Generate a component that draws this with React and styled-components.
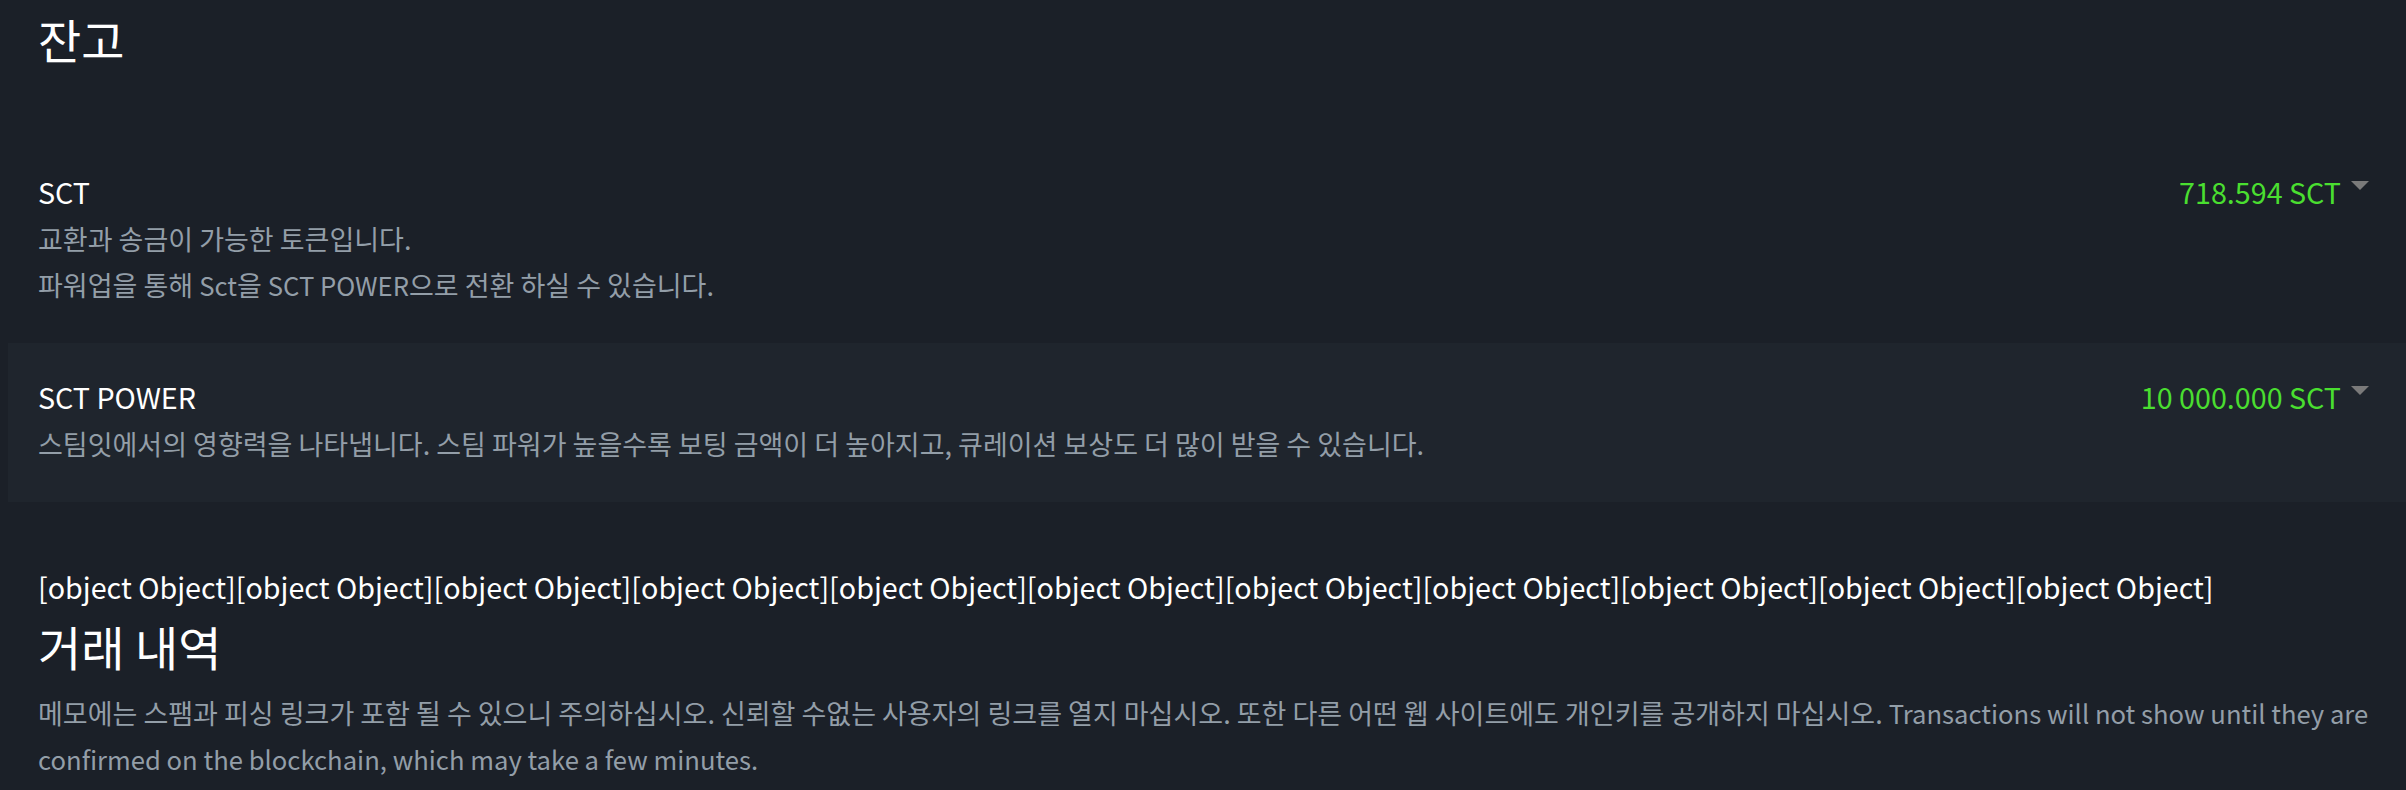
import React from "react";
import styled, { createGlobalStyle } from "styled-components";

const GlobalStyle = createGlobalStyle`
  html, body {
    margin: 0;
    padding: 0;
    background: #1b2028;
  }
  body {
    font-family: "Noto Sans CJK KR", "Noto Sans", sans-serif;
    color: #ffffff;
    overflow-x: hidden;
  }
`;

const Page = styled.div`
  padding-left: 8px;
  padding-top: 12px;
`;

const Section = styled.section`
  padding: 0 30px;
`;

const Title = styled.h2`
  margin: 0;
  font-size: 47px;
  line-height: 54px;
  font-weight: 400;
  color: #ffffff;
`;

const Balances = styled.div`
  margin-top: 72px;
`;

const BalanceRow = styled.div`
  display: flex;
  justify-content: space-between;
  align-items: flex-start;
  padding: 34px 37px 35px 30px;
  background: ${(p) => (p.$shaded ? "#1f252d" : "transparent")};
`;

const Info = styled.div`
  display: flex;
  flex-direction: column;
`;

const Label = styled.div`
  font-size: 28.7px;
  line-height: 40px;
  color: #ffffff;
  margin-bottom: 4px;
`;

const Desc = styled.div`
  font-size: 27px;
  line-height: 46px;
  color: #939ea8;
`;

const Latin = styled.span`
  font-size: 0.95em;
`;

const Amount = styled.div`
  display: flex;
  align-items: center;
  gap: 10px;
  font-size: 28.7px;
  line-height: 40px;
  color: #4ade30;
  white-space: nowrap;
`;

const Caret = styled.span`
  display: inline-block;
  width: 0;
  height: 0;
  border-left: 9px solid transparent;
  border-right: 9px solid transparent;
  border-top: 9px solid #7a7a7a;
  margin-bottom: 14px;
`;

const History = styled(Section)`
  margin-top: 65px;
`;

const ObjectLine = styled.div`
  font-size: 28.7px;
  line-height: 40px;
  color: #ffffff;
`;

const HistoryTitle = styled(Title)`
  margin-top: 12px;
`;

const Notice = styled.p`
  margin: 17px 0 0;
  font-size: 27px;
  line-height: 46px;
  color: #939ea8;
  padding-right: 6px;
`;

const balances = [
  {
    label: "SCT",
    amount: "718.594 SCT",
    desc: [
      <>교환과 송금이 가능한 토큰입니다.</>,
      <>
        파워업을 통해 <Latin>Sct</Latin>을 <Latin>SCT POWER</Latin>으로 전환 하실 수 있습니다.
      </>,
    ],
  },
  {
    label: "SCT POWER",
    amount: "10 000.000 SCT",
    desc: [
      <>
        스팀잇에서의 영향력을 나타냅니다. 스팀 파워가 높을수록 보팅 금액이 더 높아지고, 큐레이션 보상도 더 많이 받을 수 있습니다.
      </>,
    ],
    shaded: true,
  },
];

export default function App() {
  return (
    <>
      <GlobalStyle />
      <Page>
        <Section>
          <Title>잔고</Title>
        </Section>
        <Balances>
          {balances.map((b) => (
            <BalanceRow key={b.label} $shaded={b.shaded}>
              <Info>
                <Label>{b.label}</Label>
                {b.desc.map((d, i) => (
                  <Desc key={i}>{d}</Desc>
                ))}
              </Info>
              <Amount>
                {b.amount}
                <Caret />
              </Amount>
            </BalanceRow>
          ))}
        </Balances>
        <History>
          <ObjectLine>{"[object Object]".repeat(11)}</ObjectLine>
          <HistoryTitle>거래 내역</HistoryTitle>
          <Notice>
            메모에는 스팸과 피싱 링크가 포함 될 수 있으니 주의하십시오. 신뢰할 수없는 사용자의 링크를 열지 마십시오. 또한 다른 어떤 웹 사이트에도 개인키를 공개하지 마십시오.{" "}
            <Latin>
              Transactions will not show until they are confirmed on the blockchain, which may take a few minutes.
            </Latin>
          </Notice>
        </History>
      </Page>
    </>
  );
}
